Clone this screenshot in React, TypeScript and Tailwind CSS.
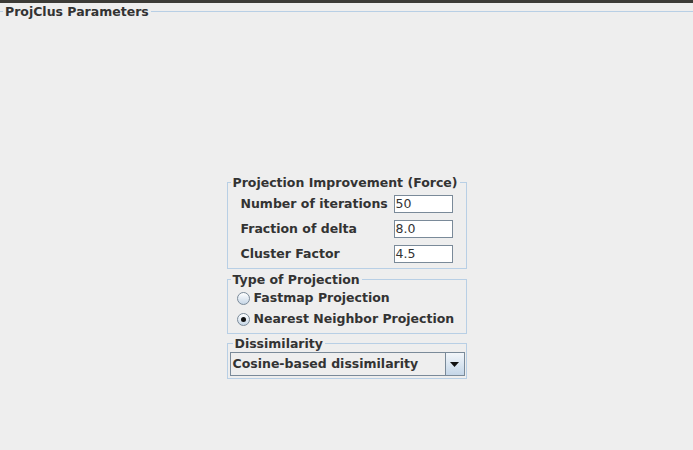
import React from "react";

const font = { fontFamily: '"DejaVu Sans", "Liberation Sans", sans-serif' };

function Radio({ checked, label }: { checked?: boolean; label: string }) {
  return (
    <div className="flex h-[21px] items-center pl-[9px]">
      <div className="flex h-[13px] w-[13px] items-center justify-center rounded-full border border-[#7a8a99] bg-gradient-to-b from-[#ffffff] to-[#c6d6e6]">
        {checked && <div className="h-[5px] w-[5px] rounded-full bg-[#111111]" />}
      </div>
      <span className="ml-[4px] whitespace-nowrap text-[12.5px] font-bold text-[#333333]">{label}</span>
    </div>
  );
}

function Field({ label, value }: { label: string; value: string }) {
  return (
    <div className="flex h-[18px] items-center">
      <span className="w-[166px] whitespace-nowrap pl-[13px] text-[12.5px] font-bold text-[#333333]">{label}</span>
      <div className="flex h-[18px] w-[59px] items-center border border-[#7a8a99] bg-white pl-[1px] text-[12.5px] text-[#333333]">
        {value}
      </div>
    </div>
  );
}

export default function App() {
  return (
    <div className="flex h-[450px] w-[693px] flex-col bg-[#eeeeee]" style={font}>
      <div className="h-[3px] bg-[#3c3b37]" />
      <div className="flex h-[17px] items-center">
        <div className="h-px w-[3px] bg-[#b8cfe5]" />
        <span className="px-[2px] text-[12.5px] font-bold leading-[15px] text-[#333333]">ProjClus Parameters</span>
        <div className="h-px flex-1 bg-[#b8cfe5]" />
      </div>
      <div className="flex flex-col items-center pt-[155px]">
        <fieldset className="w-[240px] border border-[#b8cfe5] pb-[5px] pt-[5px]">
          <legend className="ml-[3px] px-[2px] text-[12.5px] font-bold leading-[15px] text-[#333333]">
            Projection Improvement (Force)
          </legend>
          <div className="flex flex-col gap-[7px]">
            <Field label="Number of iterations" value="50" />
            <Field label="Fraction of delta" value="8.0" />
            <Field label="Cluster Factor" value="4.5" />
          </div>
        </fieldset>
        <fieldset className="mt-[3px] w-[240px] border border-[#b8cfe5] pb-[3px] pt-[1px]">
          <legend className="ml-[3px] px-[2px] text-[12.5px] font-bold leading-[15px] text-[#333333]">
            Type of Projection
          </legend>
          <Radio label="Fastmap Projection" />
          <Radio checked label="Nearest Neighbor Projection" />
        </fieldset>
        <fieldset className="mt-[2px] w-[240px] border border-[#b8cfe5] pb-[2px] pl-[2px] pr-[1px] pt-[1px]">
          <legend className="ml-[3px] px-[2px] text-[12.5px] font-bold leading-[15px] text-[#333333]">
            Dissimilarity
          </legend>
          <div className="flex h-[24px] w-[235px] border border-[#7a8a99] bg-[#eeeeee]">
            <div className="flex flex-1 items-center pl-[2px] text-[12.5px] font-bold text-[#333333]">
              Cosine-based dissimilarity
            </div>
            <div className="flex w-[19px] items-center justify-center border-l border-[#7a8a99] bg-gradient-to-b from-[#f2f6fa] to-[#c4d6e8]">
              <svg width="9" height="5" viewBox="0 0 9 5">
                <path d="M0 0 H9 L4.5 5 Z" fill="#111111" />
              </svg>
            </div>
          </div>
        </fieldset>
      </div>
    </div>
  );
}
